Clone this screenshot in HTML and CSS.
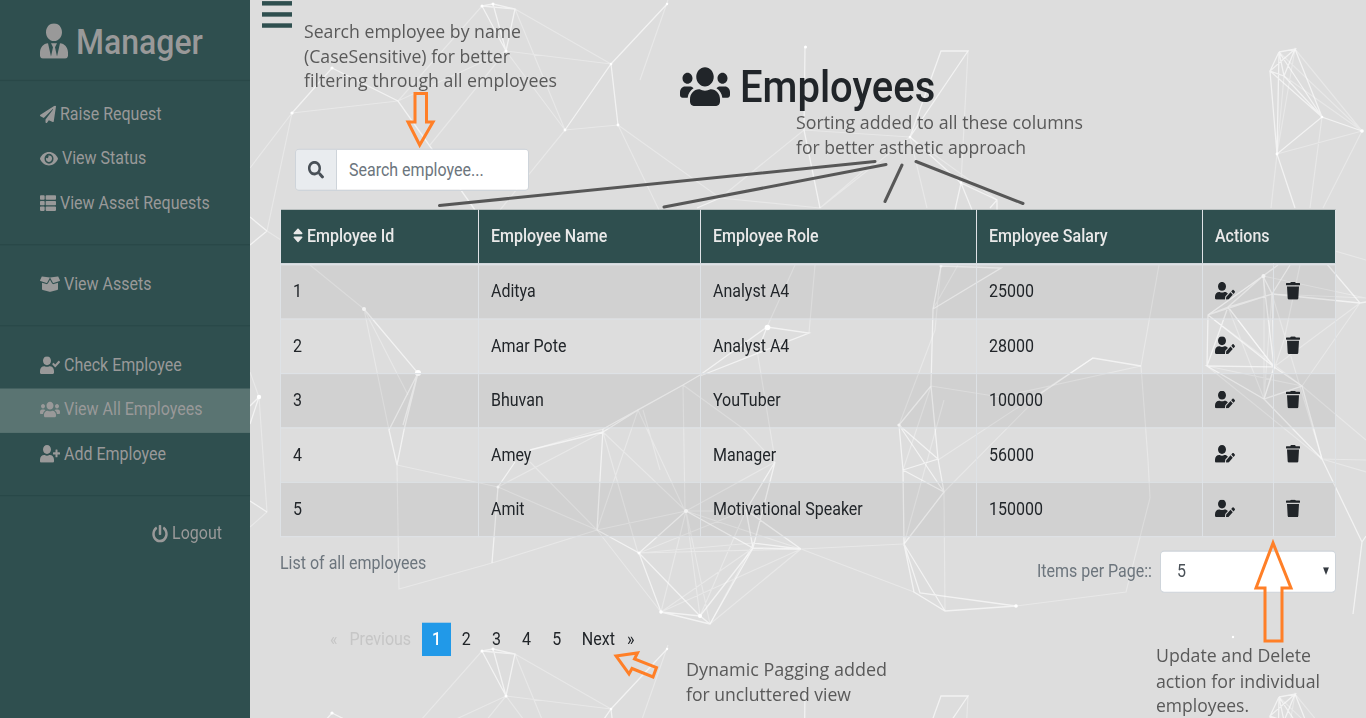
FILE: index.html
```html
<!DOCTYPE html>
<html lang="en">
<head>
<meta charset="utf-8">
<title>Employees</title>
<link rel="stylesheet" href="styles.css">
</head>
<body>
<svg class="defs" width="0" height="0">
  <symbol id="user-tie" viewBox="0 0 448 512"><path d="M224 256c70.7 0 128-57.3 128-128S294.7 0 224 0 96 57.3 96 128s57.3 128 128 128zm95.8 32.6L272 480l-32-136 32-56h-96l32 56-32 136-47.8-191.4C56.9 292 0 350.3 0 422.4V464c0 26.5 21.5 48 48 48h352c26.5 0 48-21.5 48-48v-41.6c0-72.1-56.9-130.4-128.2-133.8z"/></symbol>
  <symbol id="plane" viewBox="0 0 512 512"><path d="M476 3.2L12.5 270.6c-18.1 10.4-15.8 35.6 2.2 43.2L121 358.4l287.3-253.2c5.5-4.9 13.3 2.6 8.6 8.3L176 407v80.5c0 23.6 28.5 32.9 42.5 15.8L282 426l124.6 52.2c14.2 6 30.4-2.9 33-18.2l72-432C515 7.8 493.3-6.8 476 3.2z"/></symbol>
  <symbol id="eye" viewBox="0 0 576 512"><path d="M572.52 241.4C518.29 135.59 410.93 64 288 64S57.68 135.64 3.48 241.41a32.35 32.35 0 0 0 0 29.19C57.71 376.41 165.07 448 288 448s230.32-71.64 284.52-177.41a32.35 32.35 0 0 0 0-29.19zM288 400a144 144 0 1 1 144-144 143.93 143.93 0 0 1-144 144zm0-240a95.31 95.31 0 0 0-25.31 3.79 47.85 47.85 0 0 1-66.9 66.9A95.78 95.78 0 1 0 288 160z"/></symbol>
  <symbol id="th-list" viewBox="0 0 512 512"><path d="M149.333 216v80c0 13.255-10.745 24-24 24H24c-13.255 0-24-10.745-24-24v-80c0-13.255 10.745-24 24-24h101.333c13.255 0 24 10.745 24 24zM0 376v80c0 13.255 10.745 24 24 24h101.333c13.255 0 24-10.745 24-24v-80c0-13.255-10.745-24-24-24H24c-13.255 0-24 10.745-24 24zM125.333 32H24C10.745 32 0 42.745 0 56v80c0 13.255 10.745 24 24 24h101.333c13.255 0 24-10.745 24-24V56c0-13.255-10.745-24-24-24zm80 448H488c13.255 0 24-10.745 24-24v-80c0-13.255-10.745-24-24-24H205.333c-13.255 0-24 10.745-24 24v80c0 13.255 10.745 24 24 24zm-24-424v80c0 13.255 10.745 24 24 24H488c13.255 0 24-10.745 24-24V56c0-13.255-10.745-24-24-24H205.333c-13.255 0-24 10.745-24 24zm24 264H488c13.255 0 24-10.745 24-24v-80c0-13.255-10.745-24-24-24H205.333c-13.255 0-24 10.745-24 24v80c0 13.255 10.745 24 24 24z"/></symbol>
  <symbol id="box" viewBox="0 0 640 512"><path d="M425.7 256c-16.9 0-32.8-9-41.4-23.4L320 126l-64.2 106.6c-8.7 14.5-24.6 23.5-41.5 23.5-4.5 0-9-.6-13.3-1.9L64 215v178c0 14.7 10 27.5 24.2 31l216.2 54.1c10.2 2.5 20.9 2.5 31 0L551.8 424c14.2-3.6 24.2-16.4 24.2-31V215l-137 39.1c-4.3 1.3-8.8 1.9-13.3 1.9zm212.6-112.2L586.8 41c-3.1-6.2-9.8-9.8-16.7-8.9L320 64l91.7 152.1c3.8 6.3 11.4 9.3 18.5 7.3l197.9-56.5c9.9-2.9 14.7-13.9 10.2-23.1zM53.2 41L1.7 143.8c-4.6 9.2.3 20.2 10.1 23l197.9 56.5c7.1 2 14.7-1 18.5-7.3L320 64 69.8 32.1c-6.9-.8-13.5 2.7-16.6 8.9z"/></symbol>
  <symbol id="user-check" viewBox="0 0 640 512"><path d="M224 256c70.7 0 128-57.3 128-128S294.7 0 224 0 96 57.3 96 128s57.3 128 128 128zm89.6 32h-16.7c-22.2 10.2-46.9 16-72.9 16s-50.6-5.8-72.9-16h-16.7C60.2 288 0 348.2 0 422.4V464c0 26.5 21.5 48 48 48h352c26.5 0 48-21.5 48-48v-41.6c0-74.2-60.2-134.4-134.4-134.4zm323-128.4l-27.8-28.1c-4.6-4.7-12.1-4.7-16.8-.1l-104.8 104-45.5-45.8c-4.6-4.7-12.1-4.7-16.8-.1l-28.1 27.9c-4.7 4.6-4.7 12.1-.1 16.8l81.7 82.3c4.6 4.7 12.1 4.7 16.8.1l141.3-140.2c4.6-4.7 4.7-12.2.1-16.8z"/></symbol>
  <symbol id="users" viewBox="0 0 640 512"><path d="M96 224c35.3 0 64-28.7 64-64s-28.7-64-64-64-64 28.7-64 64 28.7 64 64 64zm448 0c35.3 0 64-28.7 64-64s-28.7-64-64-64-64 28.7-64 64 28.7 64 64 64zm32 32h-64c-17.6 0-33.5 7.1-45.1 18.6 40.3 22.1 68.9 62 75.1 109.4h66c17.7 0 32-14.3 32-32v-32c0-35.3-28.7-64-64-64zm-256 0c61.9 0 112-50.1 112-112S381.9 32 320 32 208 82.1 208 144s50.1 112 112 112zm76.8 32h-8.3c-20.8 10-43.9 16-68.5 16s-47.6-6-68.5-16h-8.3C179.6 288 128 339.6 128 403.2V432c0 26.5 21.5 48 48 48h288c26.5 0 48-21.5 48-48v-28.8c0-63.6-51.6-115.2-115.2-115.2zm-223.7-13.4C161.5 263.1 145.6 256 128 256H64c-35.3 0-64 28.7-64 64v32c0 17.7 14.3 32 32 32h65.9c6.3-47.4 34.9-87.3 75.2-109.4z"/></symbol>
  <symbol id="user-plus" viewBox="0 0 640 512"><path d="M624 208h-64v-64c0-8.8-7.2-16-16-16h-32c-8.8 0-16 7.2-16 16v64h-64c-8.8 0-16 7.2-16 16v32c0 8.8 7.2 16 16 16h64v64c0 8.8 7.2 16 16 16h32c8.8 0 16-7.2 16-16v-64h64c8.8 0 16-7.2 16-16v-32c0-8.8-7.2-16-16-16zm-400 48c70.7 0 128-57.3 128-128S294.7 0 224 0 96 57.3 96 128s57.3 128 128 128zm89.6 32h-16.7c-22.2 10.2-46.9 16-72.9 16s-50.6-5.8-72.9-16h-16.7C60.2 288 0 348.2 0 422.4V464c0 26.5 21.5 48 48 48h352c26.5 0 48-21.5 48-48v-41.6c0-74.2-60.2-134.4-134.4-134.4z"/></symbol>
  <symbol id="power" viewBox="0 0 512 512"><path d="M400 54.1c63 45 104 118.6 104 201.9 0 136.8-110.8 247.7-247.5 248C120 504.3 8.2 393 8 256.4 7.9 173.1 48.9 99.3 111.8 54.2c11.7-8.3 28-4.8 35 7.7L162.6 90c5.9 10.5 3.1 23.8-6.6 31-41.5 30.8-68 79.6-68 134.9-.1 92.3 74.5 168.1 168 168.1 91.6 0 168.6-74.2 168-169.1-.3-51.8-24.7-101.8-68.1-134-9.7-7.2-12.4-20.5-6.5-30.9l15.8-28.1c7-12.4 23.2-16.1 34.8-7.8zM296 264V24c0-13.3-10.7-24-24-24h-32c-13.3 0-24 10.7-24 24v240c0 13.3 10.7 24 24 24h32c13.3 0 24-10.7 24-24z"/></symbol>
  <symbol id="search" viewBox="0 0 512 512"><path d="M505 442.7L405.3 343c-4.5-4.5-10.6-7-17-7H372c27.6-35.3 44-79.7 44-128C416 93.1 322.9 0 208 0S0 93.1 0 208s93.1 208 208 208c48.3 0 92.7-16.4 128-44v16.3c0 6.4 2.5 12.5 7 17l99.7 99.7c9.4 9.4 24.6 9.4 33.9 0l28.3-28.3c9.4-9.4 9.4-24.6.1-34zM208 336c-70.7 0-128-57.2-128-128 0-70.7 57.2-128 128-128 70.7 0 128 57.2 128 128 0 70.7-57.2 128-128 128z"/></symbol>
  <symbol id="sort" viewBox="0 0 320 512"><path d="M41 288h238c21.4 0 32.1 25.9 17 41L177 448c-9.4 9.4-24.6 9.4-33.9 0L24 329c-15.1-15.1-4.4-41 17-41zm255-105L177 64c-9.4-9.4-24.6-9.4-33.9 0L24 183c-15.1 15.1-4.4 41 17 41h238c21.4 0 32.1-25.9 17-41z"/></symbol>
  <symbol id="user-edit" viewBox="0 0 640 512"><path d="M224 256c70.7 0 128-57.3 128-128S294.7 0 224 0 96 57.3 96 128s57.3 128 128 128zm89.6 32h-16.7c-22.2 10.2-46.9 16-72.9 16s-50.6-5.8-72.9-16h-16.7C60.2 288 0 348.2 0 422.4V464c0 26.5 21.5 48 48 48h274.9c-2.4-6.8-3.4-14-2.6-21.3l6.8-60.9 1.2-11.1 7.9-7.9 77.3-77.3c-24.5-27.7-60-45.5-99.9-45.5zm45.3 145.3l-6.8 61c-1.1 10.2 7.5 18.8 17.6 17.6l60.9-6.8 137.9-137.9-71.7-71.7-137.9 137.8zM633 268.9L595.1 231c-9.3-9.3-24.5-9.3-33.8 0l-37.8 37.8-4.1 4.1 71.8 71.7 41.8-41.8c9.3-9.4 9.3-24.5 0-33.9z"/></symbol>
  <symbol id="trash" viewBox="0 0 448 512"><path d="M432 32H312l-9.4-18.7A24 24 0 0 0 281.1 0H166.8a23.72 23.72 0 0 0-21.4 13.3L136 32H16A16 16 0 0 0 0 48v32a16 16 0 0 0 16 16h416a16 16 0 0 0 16-16V48a16 16 0 0 0-16-16zM53.2 467a48 48 0 0 0 47.9 45h245.8a48 48 0 0 0 47.9-45L416 128H32z"/></symbol>
</svg>

<svg class="network" width="1366" height="718" viewBox="0 0 1366 718">
  <g id="mesh">
    <path class="faint" d="M482 6L398 101L506 51L611 64L515 9M398 101L292 113L250 168M292 113L267 231L281 240M515 9L565 130M506 51L565 130M506 51L430 145M565 130L618 125M565 130L500 210M668 0L640 80M618 125L659 210M618 125L720 198L820 208M804 130L910 137M804 130L720 198M820 208L910 137M968 51L961 183M910 137L927 208M910 137L997 200M1279 52L1362 131L1277 154M1295 49L1362 131L1284 76M1295 49L1277 154M1284 76L1277 154M1322 117L1310 208M1362 131L1323 208M1277 154L1271 208M1335 251L1366 260M310 265L364 309L389 430M364 309L408 395M397 465L399 589L492 563L597 530L686 511L775 462M397 465L498 487L597 530M498 487L603 432M530 450L603 429M530 462L597 530M683 385L685 511L638 410L597 530M643 410L660 470M603 432L638 553M603 432L686 511M683 385L745 430L775 462M757 350L775 460M767 327L795 265M809 333L815 265M597 530L661 612M686 511L661 612M686 511L700 616L686 511L710 624M686 511L801 549M686 511L739 511M639 553L753 543M639 553L801 549M639 553L746 510M753 548L661 612M753 544L710 624M801 549L661 612M801 549L710 624M746 510L700 616M801 549L903 544M801 549L914 592M941 266L935 330L899 425M933 309L958 265M931 386L1000 397L1141 366L1148 460L1150 498M938 460L1093 358M944 492L1040 395M944 492L945 611M904 544L944 400M931 386L903 470M1159 265L1141 366M1016 606L1126 592L1150 498M1263 276L1366 298M1263 276L1208 315M1272 294L1366 298M1264 276L1264 399L1272 294M1228 307L1274 367M1228 307L1264 399M1208 315L1302 386M1207 366L1302 386M1207 366L1322 459M1274 367L1360 303M1302 386L1360 303M1272 294L1322 459M1302 386L1366 440M1320 459L1366 460M1322 459L1366 472M1300 265L1284 340L1264 399M250 372L259 397L267 512L250 527M876 160L820 208"/>
    <path class="bright" d="M482 6L493 4L515 9L506 51L493 4M482 6L506 51M482 6L515 9M292 113L332 68L398 101L475 210M267 231L250 217M267 231L250 245M565 130L611 64L668 3M611 64L618 125M805 47L804 130L820 208M720 198L697 208M910 137L941 51L968 51L910 137L961 183L997 200L997 210M997 200L990 208M961 183L955 210M961 183L972 210M1279 52L1295 49L1270 71L1284 76L1295 49L1322 117L1362 131M1279 52L1270 71L1277 154L1322 117L1284 76L1279 52L1322 117M1270 71L1322 117M1279 52L1277 154L1295 208M364 309L418 373L389 430L397 465L404 430L418 373L403 425M603 429L683 385L700 375L767 327L809 333L700 376M603 432L638 410L683 385M530 450L603 432M515 462L498 487L492 563M603 429L597 530L639 553L661 612L700 616L710 624L661 612M639 553L700 616M639 553L686 511L753 548L775 462L746 510L753 548L801 549L753 543M746 510L801 549M753 548L700 616L710 624L753 548M767 327L760 345M941 266L1001 268L933 309L931 386L899 425L903 470L938 459L899 425L944 492L903 470M941 266L933 309M931 386L938 459L944 492L904 544L903 470M1040 394L1093 358L1141 366M904 544L914 592L945 611L904 544L920 593L1016 606L945 611L914 592M1263 276L1208 315L1272 294L1228 307L1208 315L1207 366L1228 307L1263 276L1272 294L1274 367L1207 366L1264 399L1302 386L1274 367L1264 399M1228 307L1274 367M1208 315L1274 367L1263 276L1278 265M1272 294L1290 265M1302 386L1322 459L1264 399M1322 459L1362 542L1353 614M1326 263L1360 303L1366 302M1360 303L1272 294M259 397L250 406M259 397L250 424M267 512L250 501M1362 542L1366 536"/>
    <g class="dots"><circle cx="482" cy="6" r="1.5"/><circle cx="493" cy="4" r="1.5"/><circle cx="506" cy="51" r="1.5"/><circle cx="332" cy="68" r="1.6"/><circle cx="292" cy="113" r="1.6"/><circle cx="565" cy="130" r="1.4"/><circle cx="611" cy="64" r="1.3"/><circle cx="618" cy="125" r="1.4"/><circle cx="805.500" cy="47" r="1.5"/><circle cx="910" cy="137" r="1.3"/><circle cx="961" cy="183" r="1.4"/><circle cx="1322" cy="117" r="1.3"/><circle cx="1362" cy="131" r="1.8"/><circle cx="1277" cy="154" r="1.4"/><circle cx="364" cy="309" r="2"/><circle cx="418" cy="373" r="3"/><circle cx="767.500" cy="327.500" r="2.800"/><circle cx="941" cy="266" r="1.5"/><circle cx="899" cy="425" r="1.6"/><circle cx="1263.500" cy="276" r="2"/><circle cx="686" cy="511" r="2"/><circle cx="639" cy="553" r="1.5"/><circle cx="661" cy="612" r="1.8"/><circle cx="700" cy="616" r="2"/><circle cx="1016" cy="606" r="1.8"/><circle cx="498" cy="487" r="1.5"/><circle cx="259" cy="397" r="2.2"/><circle cx="1233" cy="637" r="1.2"/><circle cx="667" cy="4" r="1.2"/></g>
  </g>
  <use href="#mesh" y="645"/>
</svg>

<div class="app">
  <aside class="sidebar">
    <h3 class="brand"><svg class="ico w-brand"><use href="#user-tie"/></svg><span>Manager</span></h3>
    <nav class="group first">
      <a class="item"><svg class="ico w16"><use href="#plane"/></svg><span>Raise Request</span></a>
      <a class="item"><svg class="ico w18"><use href="#eye"/></svg><span>View Status</span></a>
      <a class="item"><svg class="ico w16"><use href="#th-list"/></svg><span>View Asset Requests</span></a>
    </nav>
    <nav class="group">
      <a class="item"><svg class="ico w20"><use href="#box"/></svg><span>View Assets</span></a>
    </nav>
    <nav class="group">
      <a class="item"><svg class="ico w20"><use href="#user-check"/></svg><span>Check Employee</span></a>
      <a class="item active"><svg class="ico w20"><use href="#users"/></svg><span>View All Employees</span></a>
      <a class="item"><svg class="ico w20"><use href="#user-plus"/></svg><span>Add Employee</span></a>
    </nav>
    <nav class="group last">
      <a class="item logout"><svg class="ico w16"><use href="#power"/></svg><span>Logout</span></a>
    </nav>
  </aside>

  <main class="main">
    <div class="burger"><i></i><i></i><i></i></div>
    <h1 class="title"><svg class="ico w-title"><use href="#users"/></svg><span>Employees</span></h1>
    <div class="search">
      <div class="addon"><svg class="ico w16"><use href="#search"/></svg></div>
      <div class="field">Search employee...</div>
    </div>
    <table class="table">
      <colgroup><col class="c1"><col class="c2"><col class="c3"><col class="c4"><col class="c5"><col class="c6"></colgroup>
      <thead><tr><th><svg class="ico w10"><use href="#sort"/></svg> Employee Id</th><th>Employee Name</th><th>Employee Role</th><th>Employee Salary</th><th colspan="2">Actions</th></tr></thead>
      <tbody>
        <tr><td>1</td><td>Aditya</td><td>Analyst A4</td><td>25000</td><td><svg class="ico w20"><use href="#user-edit"/></svg></td><td><svg class="ico w14"><use href="#trash"/></svg></td></tr>
        <tr><td>2</td><td>Amar Pote</td><td>Analyst A4</td><td>28000</td><td><svg class="ico w20"><use href="#user-edit"/></svg></td><td><svg class="ico w14"><use href="#trash"/></svg></td></tr>
        <tr><td>3</td><td>Bhuvan</td><td>YouTuber</td><td>100000</td><td><svg class="ico w20"><use href="#user-edit"/></svg></td><td><svg class="ico w14"><use href="#trash"/></svg></td></tr>
        <tr><td>4</td><td>Amey</td><td>Manager</td><td>56000</td><td><svg class="ico w20"><use href="#user-edit"/></svg></td><td><svg class="ico w14"><use href="#trash"/></svg></td></tr>
        <tr><td>5</td><td>Amit</td><td>Motivational Speaker</td><td>150000</td><td><svg class="ico w20"><use href="#user-edit"/></svg></td><td><svg class="ico w14"><use href="#trash"/></svg></td></tr>
      </tbody>
    </table>
    <div class="below">
      <span class="caption">List of all employees</span>
      <div class="per-page"><span>Items per Page::</span><div class="select"><span>5</span><svg class="caret" width="6" height="7" viewBox="0 0 6 7"><path d="M0 0h6L3 7z"/></svg></div></div>
    </div>
    <div class="pager">
      <span class="prev">«</span><span class="prev word">Previous</span><span class="page on">1</span><span class="page">2</span><span class="page">3</span><span class="page">4</span><span class="page">5</span><span class="next word">Next</span><span class="next">»</span>
    </div>
  </main>
</div>

<svg class="notes" width="1366" height="718" viewBox="0 0 1366 718">
  <g class="note">
    <text x="304" y="38" textLength="217" lengthAdjust="spacingAndGlyphs">Search employee by name</text>
    <text x="304" y="63" textLength="206" lengthAdjust="spacingAndGlyphs">(CaseSensitive) for better</text>
    <text x="304" y="87" textLength="253" lengthAdjust="spacingAndGlyphs">filtering through all employees</text>
    <text x="796" y="129" textLength="287" lengthAdjust="spacingAndGlyphs">Sorting added to all these columns</text>
    <text x="796" y="154" textLength="230" lengthAdjust="spacingAndGlyphs">for better asthetic approach</text>
    <text x="686" y="676" textLength="201" lengthAdjust="spacingAndGlyphs">Dynamic Pagging added</text>
    <text x="686" y="701" textLength="165" lengthAdjust="spacingAndGlyphs">for uncluttered view</text>
    <text x="1156" y="662" textLength="155" lengthAdjust="spacingAndGlyphs">Update and Delete</text>
    <text x="1156" y="688" textLength="164" lengthAdjust="spacingAndGlyphs">action for individual</text>
    <text x="1156" y="712" textLength="93" lengthAdjust="spacingAndGlyphs">employees.</text>
  </g>
  <path class="pointer" d="M439.500 205.500L875 161.500M664 207L886 164.500M902 165L885 201.500M916 161.500L1023 203.500"/>
  <g class="arrow">
    <path d="M415 93.500H426.500V122H433L419.700 145L408 122H415Z"/>
    <path d="M1273 543L1256 588H1265V641H1282V588H1291Z"/>
    <path d="M616 656L637.500 653L634.500 659L656.500 667.500L653 677L632 668.500L629 674Z"/>
  </g>
</svg>
</body>
</html>
```
FILE: styles.css
```css
* { box-sizing: border-box; }
body {
  margin: 0;
  height: 718px;
  overflow: hidden;
  position: relative;
  background: #ddd;
  color: #212529;
  font: 16px/24px Roboto, sans-serif;
}
.defs, .network, .notes { position: absolute; left: 0; top: 0; }
.network { fill: none; stroke: #fff; }
.faint { stroke-width: 1.2; opacity: .32; }
.bright { stroke-width: 1.3; opacity: .62; }
.dots { fill: #fff; stroke: none; }

.app {
  position: relative;
  display: flex;
  width: 1366px;
  height: 647px;
  transform: scaleY(1.11);
  transform-origin: 0 0;
}
.ico { display: inline-block; height: 16px; vertical-align: -2px; fill: currentColor; }
.w10 { width: 10px; }
.w14 { width: 14px; }
.w16 { width: 16px; }
.w18 { width: 18px; }
.w20 { width: 20px; }
.w-brand { width: 28px; height: 32px; margin-top: -1px; }
.w-title { width: 50px; height: 40px; margin-top: -2px; }

.sidebar { width: 250px; background: #2f4f4f; color: #999; }
.brand {
  display: flex;
  align-items: center;
  gap: 8px;
  height: 73px;
  margin: 0;
  padding: 3px 0 0 40px;
  border-bottom: 1px solid #294848;
  font-size: 32px;
  font-weight: 500;
}
.group { padding: 15.500px 0 16.500px; border-bottom: 1px solid #294848; }
.group.first { padding: 10.500px 0 16.500px; }
.group.last { padding-top: 14.500px; border: 0; }
.item { display: flex; align-items: center; gap: 4px; height: 40px; padding: 0 0 1px 40px; }
.active { background: #5a7472; }
.logout { justify-content: flex-end; padding: 0 28px 1px 0; }

.main { width: 1116px; padding-left: 30px; }
.burger { display: flex; flex-direction: column; gap: 6px; width: 30px; margin-left: -18px; padding-top: .6px; }
.burger i { height: 4px; background: #2f4f4f; }
.title {
  display: flex;
  align-items: center;
  gap: 10px;
  height: 48px;
  margin: 30px 0 0 400px;
  font-size: 40px;
  font-weight: 500;
}
.search { display: flex; width: 234px; height: 38px; margin: 31.600px 0 16px 15px; border: 1px solid #ced4da; border-radius: 4px; overflow: hidden; }
.addon { display: flex; align-items: center; justify-content: center; width: 41px; background: #e9ecef; border-right: 1px solid #ced4da; color: #495057; }
.field { flex: 1; padding: 6.500px 12px; background: #fff; color: #6c757d; }

.table { width: 1056px; margin-top: 16.500px; border-collapse: collapse; table-layout: fixed; }
.c1 { width: 198px; }
.c2 { width: 222px; }
.c3 { width: 276px; }
.c4 { width: 226px; }
.c5 { width: 71px; }
.c6 { width: 62px; }
th, td { padding: 12px; border: 1px solid #dee2e6; text-align: left; height: 49px; line-height: 24px; }
th { background: #2f4f4f; color: #e9e9e9; font-weight: 500; border-bottom-width: 2px; border-top: 0; padding: 11.500px 12px; height: 49px; }
tbody tr:nth-child(odd) { background: rgba(0, 0, 0, .05); }

.below { display: flex; justify-content: space-between; align-items: flex-start; padding: 12px 30px 0 0; color: #6c757d; }
.per-page { display: flex; align-items: center; gap: 8px; }
.select { display: flex; align-items: center; justify-content: space-between; width: 176px; height: 38px; padding: 0 6px 0 16px; background: #fff; border: 1px solid #ced4da; border-radius: 4px; color: #495057; }
.caret { fill: #343a40; }
.pager { display: flex; align-items: center; height: 30px; margin: 27.500px 0 0 50px; color: #212529; }
.page { width: 30.200px; text-align: center; }
.on { height: 30px; line-height: 29px; width: 29px; background: #2199e8; color: #fff; font-weight: 500; }
.prev { color: #c6c6c6; }
.prev.word { margin: 0 11px 0 12px; }
.next.word { margin: 0 12px 0 10px; }

.note { font: 19px "Open Sans", sans-serif; fill: #595959; }
.pointer { fill: none; stroke: #575757; stroke-width: 3; stroke-linecap: round; }
.arrow { fill: none; stroke: #ff7f27; stroke-width: 3; }
```
